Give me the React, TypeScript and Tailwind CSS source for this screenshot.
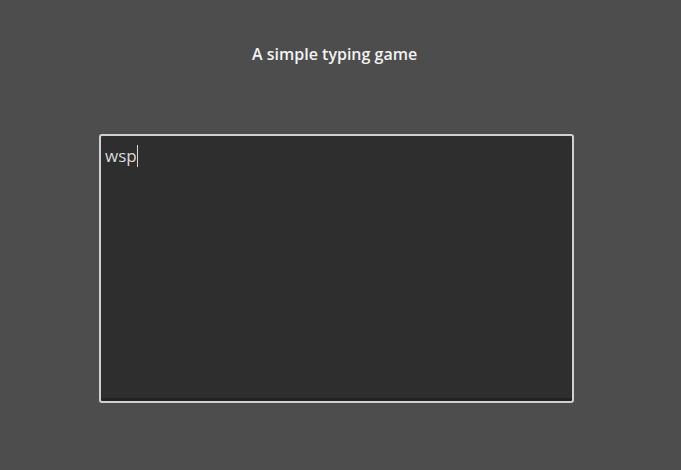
import React from "react";

export default function App() {
  return (
    <div className="w-[681px] h-[470px] bg-[#4d4d4d] flex flex-col" style={{ fontFamily: '"Open Sans", sans-serif' }}>
      <div className="pt-[43px] pl-[252px] text-[16px] leading-[22px] font-semibold text-[#f2f2f2]">A simple typing game</div>
      <div className="mt-[69px] ml-[99px] w-[475px] h-[269px] border-2 border-[#d0d0d0] rounded-[3px] bg-[#2e2e2e] shadow-[inset_0_-3px_0_#222]">
        <div className="pl-[4px] pt-[9px] text-[17px] leading-[22px] font-medium text-[#d8d8d8] flex items-center">
          <span>wsp</span>
          <span className="inline-block w-px h-[22px] bg-[#d8d8d8]" />
        </div>
      </div>
    </div>
  );
}
